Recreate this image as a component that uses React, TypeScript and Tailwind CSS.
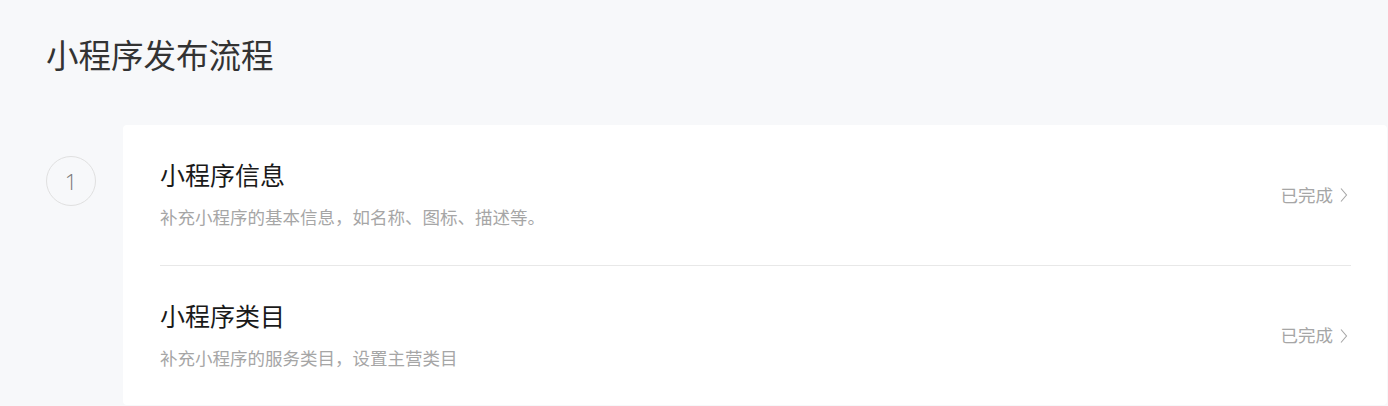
const steps = [
    { title: '小程序信息', desc: '补充小程序的基本信息，如名称、图标、描述等。', status: '已完成' },
    { title: '小程序类目', desc: '补充小程序的服务类目，设置主营类目', status: '已完成' },
];

const font = "font-['Microsoft_YaHei','Noto_Sans_CJK_SC',sans-serif]";

function Chevron() {
    return (
        <svg width="8" height="16" viewBox="0 0 8 16" fill="none" className="ml-[7px]">
            <polyline points="1,1.5 6.5,8 1,14.5" stroke="#a6a6a6" strokeWidth="1.1" />
        </svg>
    );
}

export default function App() {
    return (
        <div className={`min-h-[406px] w-[1388px] overflow-hidden bg-[#f7f8fa] ${font}`}>
            <h1 className="pl-[46px] pt-[31px] text-[32.5px] leading-[46px] font-normal text-[#333]">
                小程序发布流程
            </h1>
            <div className="mt-[48px] flex pl-[46px] pr-px">
                <div className="pt-[31px]">
                    <div className="flex h-[50px] w-[50px] items-center justify-center rounded-full border border-[#e0e0e0] font-['Open_Sans',sans-serif] text-[22px] font-light text-[#777]">
                        1
                    </div>
                </div>
                <div className="ml-[27px] flex-1 rounded-[4px] bg-white px-[37px] pr-[36px]">
                    {steps.map((step, index) => (
                        <div
                            key={index}
                            className={`flex h-[140px] items-center justify-between ${index > 0 ? 'border-t border-[#e8e8e8]' : ''}`}
                        >
                            <div className="pb-[4px]">
                                <div className="text-[25px] leading-[34px] text-[#1a1a1a]">{step.title}</div>
                                <div className="mt-[14px] text-[17.5px] leading-[24px] text-[#a6a6a6]">{step.desc}</div>
                            </div>
                            <div className="mr-[3px] flex items-center text-[17.5px] text-[#a6a6a6]">
                                <span>{step.status}</span>
                                <Chevron />
                            </div>
                        </div>
                    ))}
                </div>
            </div>
        </div>
    );
}
